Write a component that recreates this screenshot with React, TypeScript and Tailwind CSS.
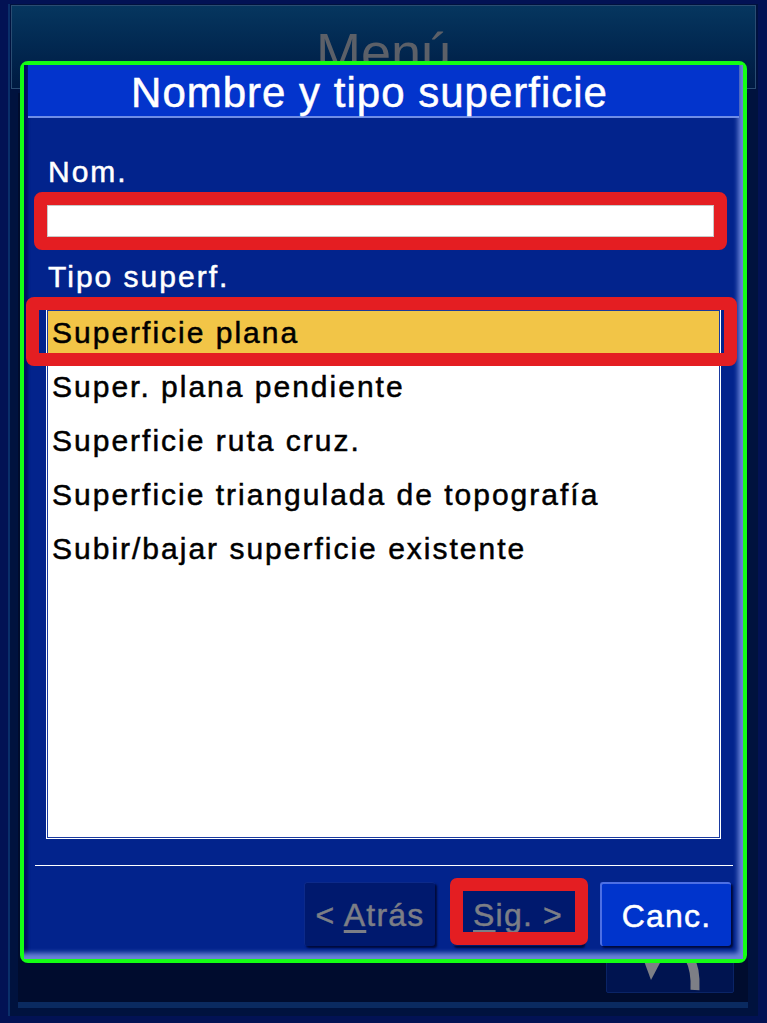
import React from "react";

// Diálogo "Nombre y tipo superficie" sobre la pantalla de menú.
const ITEMS = [
  "Superficie plana",
  "Super. plana pendiente",
  "Superficie ruta cruz.",
  "Superficie triangulada de topografía",
  "Subir/bajar superficie existente",
];

const font = "font-['Liberation_Sans',Arial,sans-serif]";
// el texto del equipo se ve más grueso que Arial regular
const heavy = "[-webkit-text-stroke-width:0.5px]";

function UndoIcon() {
  return (
    <svg width="126" height="80" viewBox="0 0 126 80" aria-hidden>
      <path d="M60 30 Q90 36 88 78" fill="none" stroke="#7d7f86" strokeWidth="9" />
      <polygon points="30,30 64,30 44,68" fill="#7d7f86" />
    </svg>
  );
}

function DlgButton({
  children,
  variant,
}: {
  children: React.ReactNode;
  variant: "off" | "on";
}) {
  const on = variant === "on";
  return (
    <button
      type="button"
      className={`h-[64px] w-[131px] rounded-[3px] text-[32px] leading-[64px] tracking-[1.2px] ${heavy} ${
        on
          ? "border-t-2 border-l-2 border-[#4d6fe4] bg-[#0034cc] text-white shadow-[2px_2px_2px_#000a3a]"
          : "border-t border-l border-[#0c2a8a] bg-[#00196e] text-[#7c7e86] shadow-[2px_2px_2px_#000a3a]"
      }`}
    >
      {children}
    </button>
  );
}

export default function App() {
  return (
    <div className={`relative h-[1023px] w-[767px] overflow-hidden bg-[#021254] pl-[8px] pr-[9px] pt-[4px] ${font}`}>
      {/* pantalla de fondo: Menú */}
      <div className="flex h-[1012px] flex-col border-l-2 border-[#0a2f6a] bg-[#00123e] pl-[1px] pr-[2px] pt-[1px]">
        <div className="h-[84px] border border-[#2a4c72] bg-gradient-to-b from-[#06365f] to-[#001a42] pt-[10px] text-center text-[54px] leading-[73px] text-[#5c6068]">
          Menú
        </div>
        <div className="ml-[7px] mr-[8px] mt-[4px] flex h-[915px] flex-col items-end justify-end border-b-[6px] border-[#0a2a60] bg-[#000c2e] pb-[9px] pr-[14px]">
          <div className="rounded-[2px] border border-[#0a2466] bg-[#001450]">
            <UndoIcon />
          </div>
        </div>
      </div>

      {/* diálogo */}
      <div className="absolute left-[20px] top-[61px] h-[902px] w-[727px] rounded-[8px] border-4 border-[#14ff14]">
        <div className="flex h-full flex-col bg-[#02238c] shadow-[inset_-6px_-7px_5px_-1px_#6a84d8,inset_4px_0_3px_#001060]">
          <div className={`mx-[4px] h-[53px] border-b-2 border-[#6f8de6] bg-[#0334cc] pr-[28px] text-center text-[42px] leading-[56px] tracking-[1px] text-white ${heavy}`}>
            Nombre y tipo superficie
          </div>

          <div className={`mt-[37px] h-[34px] pl-[24px] text-[30px] leading-[34px] tracking-[2px] text-white ${heavy}`}>
            Nom.
          </div>
          <div className="ml-[10px] mr-[16px] mt-[3px] rounded-[8px] border-[13px] border-[#e41e22]">
            <div className="h-[32px] border border-[#c8c8c8] bg-white" />
          </div>

          <div className={`mt-[10px] h-[34px] pl-[24px] text-[30px] leading-[34px] tracking-[2px] text-white ${heavy}`}>
            Tipo superf.
          </div>

          <div className="relative mx-[23px] mt-[16px]">
            <div className="h-[528px] border border-[#1a3aa0] bg-white ring-1 ring-white">
              {ITEMS.map((it, i) => (
                <div key={it} className="h-[54px]">
                  <div
                    className={`h-[43px] pl-[4px] text-[30px] leading-[44px] tracking-[2px] text-black ${heavy} ${
                      i === 0 ? "bg-[#f2c547]" : ""
                    }`}
                  >
                    {it}
                  </div>
                </div>
              ))}
            </div>
            <div className="absolute left-[-21px] right-[-17px] top-[-13px] h-[69px] rounded-[8px] border-[13px] border-[#e41e22]" />
          </div>

          <div className="ml-[11px] mr-[10px] mt-[27px] h-px bg-white" />

          <div className="mt-[16px] flex justify-end gap-[17px] pr-[12px]">
            <DlgButton variant="off">
              &lt; <span className="underline underline-offset-4">A</span>trás
            </DlgButton>
            <div className="relative">
              <DlgButton variant="off">
                <span className="underline underline-offset-4">S</span>ig. &gt;
              </DlgButton>
              <div className="absolute -left-[2px] -right-[5px] -top-[4px] bottom-[1px] rounded-[7px] border-[13px] border-[#e41e22]" />
            </div>
            <DlgButton variant="on">Canc.</DlgButton>
          </div>
        </div>
      </div>
    </div>
  );
}
